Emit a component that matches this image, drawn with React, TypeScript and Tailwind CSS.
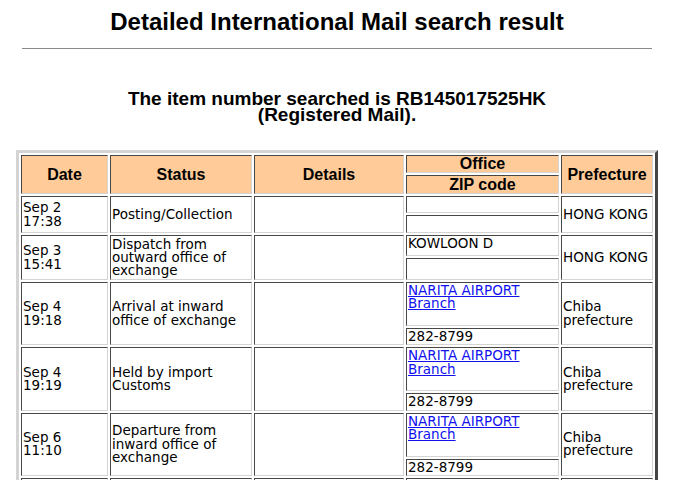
const cell =
  "border border-t-[#474747] border-l-[#474747] border-r-[#d4d4d4] border-b-[#d4d4d4] p-[1px]";
const head =
  "border border-t-[#474747] border-l-[#474747] border-r-[#d4d4d4] border-b-[#d4d4d4] p-0 bg-[#ffcc99] text-center align-middle font-bold text-[16px] leading-[16px] font-['Liberation_Sans',Arial,sans-serif]";

interface Row {
  date: string[];
  status: string;
  office: string;
  link: boolean;
  zip: string;
  pref: string;
  hOffice: string;
  hZip: string;
}

const rows: Row[] = [
  {
    date: ['Sep 2', '17:38'],
    status: 'Posting/Collection',
    office: '',
    link: false,
    zip: '',
    pref: 'HONG KONG',
    hOffice: 'h-[17px]',
    hZip: 'h-[18px]',
  },
  {
    date: ['Sep 3', '15:41'],
    status: 'Dispatch from outward office of exchange',
    office: 'KOWLOON D',
    link: false,
    zip: '',
    pref: 'HONG KONG',
    hOffice: 'h-[21px]',
    hZip: 'h-[22px]',
  },
  {
    date: ['Sep 4', '19:18'],
    status: 'Arrival at inward office of exchange',
    office: 'NARITA AIRPORT Branch',
    link: true,
    zip: '282-8799',
    pref: 'Chiba prefecture',
    hOffice: 'h-[44px]',
    hZip: 'h-[17px]',
  },
  {
    date: ['Sep 4', '19:19'],
    status: 'Held by import Customs',
    office: 'NARITA AIRPORT Branch',
    link: true,
    zip: '282-8799',
    pref: 'Chiba prefecture',
    hOffice: 'h-[44px]',
    hZip: 'h-[17px]',
  },
  {
    date: ['Sep 6', '11:10'],
    status: 'Departure from inward office of exchange',
    office: 'NARITA AIRPORT Branch',
    link: true,
    zip: '282-8799',
    pref: 'Chiba prefecture',
    hOffice: 'h-[44px]',
    hZip: 'h-[17px]',
  },
  {
    date: ['Sep 7', '09:25'],
    status: 'Arrival at delivery office',
    office: 'KITANIHONBASHI Branch',
    link: true,
    zip: '103-8799',
    pref: 'Tokyo',
    hOffice: 'h-[44px]',
    hZip: 'h-[17px]',
  },
];

export default function App() {
  return (
    <div className="w-[680px] h-[480px] overflow-hidden bg-white text-black">
      <div className="w-[674px]">
        <h1 className="pt-[8px] text-center text-[24px] leading-[28px] font-bold font-['Liberation_Sans',Arial,sans-serif]">
          Detailed International Mail search result
        </h1>
        <hr className="mt-[12px] mx-[22px] border-[#8a8a8a]" />
        <p className="mt-[42px] text-center text-[19px] leading-[16px] font-bold font-['Liberation_Sans',Arial,sans-serif]">
          The item number searched is RB145017525HK
          <br />
          (Registered Mail).
        </p>

        <table className="mt-[27px] mx-auto w-[642px] table-fixed border-separate border-spacing-[2px] border-[3px] border-t-[#d4d4d4] border-l-[#d4d4d4] border-r-[#454545] border-b-[#454545] text-[13.5px] leading-[13.3px] font-['DejaVu_Sans',sans-serif]">
          <thead>
            <tr>
              <th rowSpan={2} className={`${head} w-[87px]`}>Date</th>
              <th rowSpan={2} className={`${head} w-[142px]`}>Status</th>
              <th rowSpan={2} className={`${head} w-[150px]`}>Details</th>
              <th className={`${head} w-[153px] h-[18px]`}>Office</th>
              <th rowSpan={2} className={`${head} w-[92px]`}>Prefecture</th>
            </tr>
            <tr>
              <th className={`${head} h-[19px]`}>ZIP code</th>
            </tr>
          </thead>
          <tbody>
            {rows.map((r, i) => [
              <tr key={`a${i}`}>
                <td rowSpan={2} className={`${cell} align-middle`}>
                  {r.date[0]}
                  <br />
                  {r.date[1]}
                </td>
                <td rowSpan={2} className={`${cell} align-middle`}>
                  {r.status}
                </td>
                <td rowSpan={2} className={cell}></td>
                <td className={`${cell} ${r.hOffice} align-top`}>
                  {r.link ? (
                    <a href="#" className="text-[#1010f0] underline">
                      {r.office}
                    </a>
                  ) : (
                    r.office
                  )}
                </td>
                <td rowSpan={2} className={`${cell} align-middle`}>
                  {r.pref}
                </td>
              </tr>,
              <tr key={`b${i}`}>
                <td className={`${cell} ${r.hZip} align-top`}>{r.zip}</td>
              </tr>,
            ])}
          </tbody>
        </table>
      </div>
    </div>
  );
}
